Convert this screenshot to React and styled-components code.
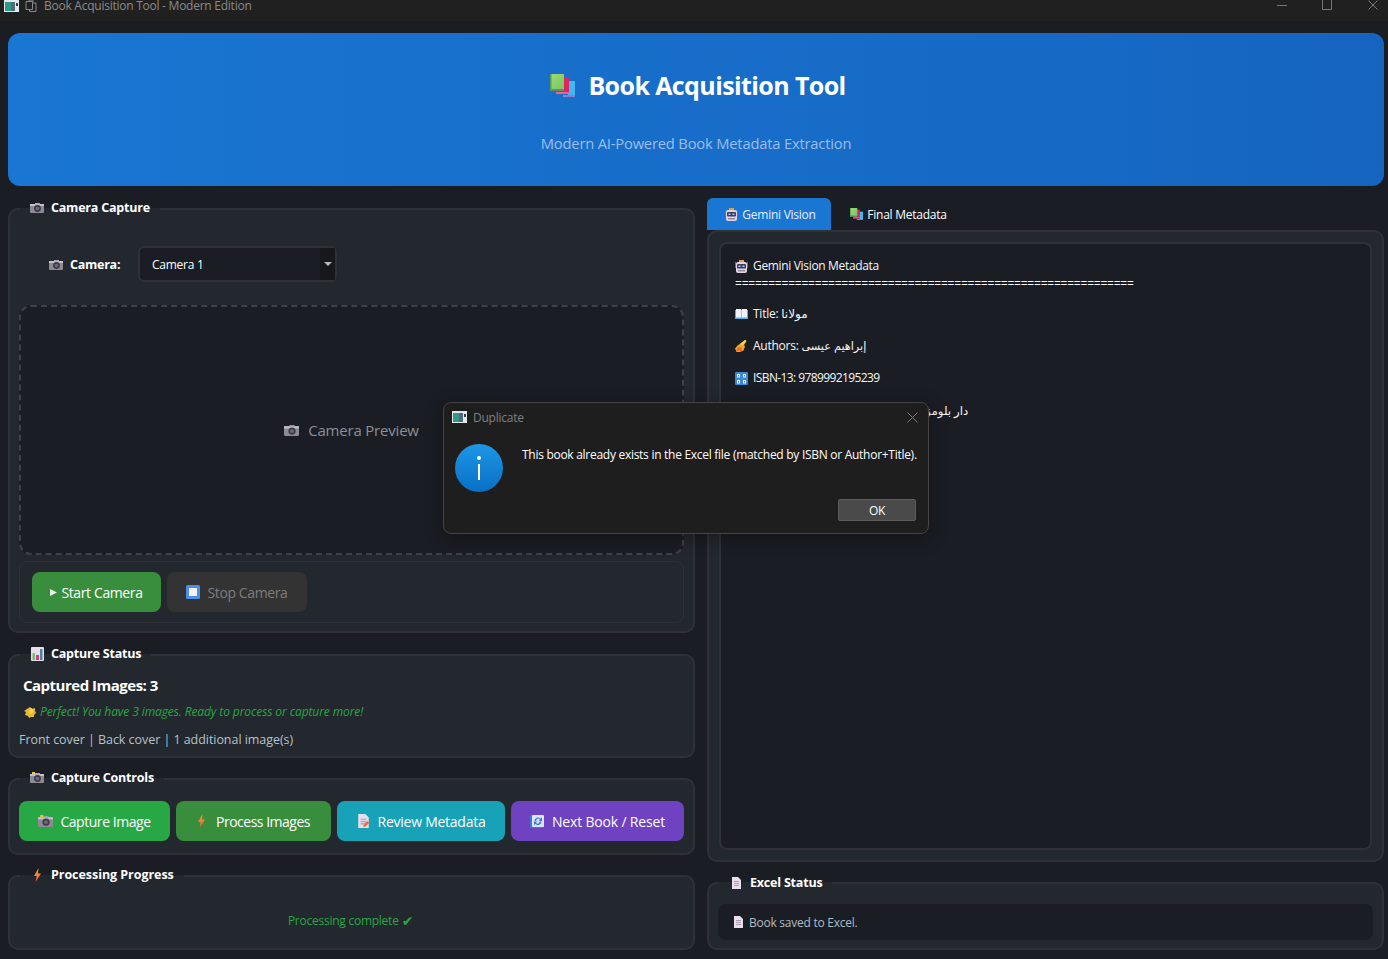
import React from 'react';
import styled, { createGlobalStyle } from 'styled-components';

const Global = createGlobalStyle`
  html, body { margin: 0; padding: 0; background: #1a1d23; }
  body { font-family: "Open Sans", "DejaVu Sans", sans-serif; color: #fff; font-size: 12px; letter-spacing: -0.25px; }
  * { box-sizing: border-box; }
`;

const Page = styled.div`
  position: relative; width: 1388px; height: 959px; overflow: hidden;
  display: flex; flex-direction: column; background: #1a1d23;
`;
const TitleBar = styled.div`
  height: 21px; flex: none; background: #202020; display: flex; align-items: flex-start; overflow: hidden;
`;
const TitleIcons = styled.div`
  display: flex; align-items: center; gap: 6px; margin: 0 0 0 4px; height: 12px; line-height: 12px; color: #8a8a8a; font-size: 12px;
`;
const WindowControls = styled.div`
  margin-left: auto; display: flex; align-items: flex-start; gap: 35px; padding-right: 10px;
  & > svg:last-child { margin-left: 1px; }
`;
const Header = styled.header`
  flex: none; height: 153px; margin: 12px 4px 0 8px; border-radius: 12px;
  background: linear-gradient(90deg, #1976d2, #1565c0);
  display: flex; flex-direction: column; align-items: center; padding-top: 35px;
`;
const HeaderTitle = styled.h1`
  margin: 0 0 0 4px; display: flex; align-items: center; gap: 13px; height: 34px;
  font-size: 25px; font-weight: 700; color: #fff; letter-spacing: -0.6px;
`;
const HeaderSub = styled.div`
  margin-top: 31px; font-size: 14.75px; color: #9dbde8; letter-spacing: -0.2px; line-height: 20px;
`;
const Main = styled.main`
  flex: 1; min-height: 0; display: grid; grid-template-columns: 687px 677px; gap: 12px;
  padding: 12px 4px 9px 8px;
`;
const Column = styled.div`
  display: flex; flex-direction: column; min-height: 0; gap: 12px; padding-top: ${p => p.$top || 0}px;
`;
const Group = styled.fieldset`
  margin: ${p => p.$offset || 0}px 0 0; min-width: 0; background: #23272e; border: 2px solid #2f3135; border-radius: 10px;
  padding: ${p => p.$padding || '0 9px 8px'}; flex: ${p => p.$grow ? 1 : 'none'};
`;
const Legend = styled.legend`
  margin-left: 1px; padding: 0 10px ${p => p.$lift ?? 3}px; height: 18px; line-height: 15px; font-size: 12.5px; font-weight: 700; color: #fff;
  letter-spacing: ${p => p.$track ?? -0.2}px; display: flex; align-items: center; gap: 7px;
`;
const IconSlot = styled.span`
  width: 14px; flex: none; display: flex; align-items: center; justify-content: center;
`;
const CameraRow = styled.div`
  display: flex; align-items: center; height: 36px; margin: 28px 0 23px 30px;
`;
const CameraLabel = styled.div`
  display: flex; align-items: center; gap: 7px; width: 89px; font-size: 12.5px; font-weight: 700;
`;
const Select = styled.div`
  width: 199px; height: 36px; background: #1a1d23; border: 2px solid #2f3135; border-radius: 6px;
  display: flex; align-items: center; padding-left: 12px; font-size: 12px;
`;
const SelectArrow = styled.div`
  margin-left: auto; width: 15px; height: 32px; background: #16181c; display: flex; align-items: center; justify-content: center;
  &::after { content: ""; border: 4px solid transparent; border-top: 4px solid #b8b8b8; border-bottom: 0; }
`;
const Preview = styled.div`
  height: 250px; background: #1a1d23; border: 2px dashed #3f4145; border-radius: 12px;
  display: flex; align-items: center; justify-content: center; gap: 9px;
  font-size: 15px; color: #8b8f96; letter-spacing: -0.2px;
`;
const ButtonPanel = styled.div`
  margin-top: 6px; height: 62px; border: 1px solid #2d3036; border-radius: 8px;
  display: flex; align-items: center; gap: 6px; padding: 0 12px;
`;
const ActionButton = styled.div`
  height: 40px; width: ${p => p.$width}px; border-radius: 8px; background: ${p => p.$bg};
  color: ${p => p.$fg || '#fff'}; font-size: 14px; font-weight: 500;
  display: flex; align-items: center; justify-content: center; gap: ${p => p.$gap ?? 8}px;
  letter-spacing: ${p => p.$track ?? -0.3}px; flex: none;
`;
const StatusCount = styled.div`
  font-size: 15px; font-weight: 700; line-height: 20px; margin: 11px 0 0 4px; letter-spacing: -0.5px;
`;
const StatusHint = styled.div`
  display: flex; align-items: center; gap: 4px; font-style: italic; font-size: 12px; color: #28a745;
  line-height: 16px; margin: 9px 0 0 5px; letter-spacing: -0.1px;
`;
const StatusInfo = styled.div`
  font-size: 12.5px; color: #b3c3cc; line-height: 16px; margin: 12px 0 0 0; letter-spacing: -0.05px;
`;
const ControlRow = styled.div`
  display: flex; gap: 6px; margin-top: 13px; padding-bottom: 4px;
`;
const ProgressText = styled.div`
  margin-top: 28px; color: #28a745; font-size: 12px; line-height: 16px;
  display: flex; justify-content: center; align-items: center; gap: 3px; padding-right: 2px;
`;
const CheckMark = styled.span`
  font-size: 14px; line-height: 16px;
`;
const TabStack = styled.div`
  flex: 1; min-height: 0; display: flex; flex-direction: column;
`;
const Tabs = styled.div`
  display: flex; height: 32px; flex: none;
`;
const Tab = styled.div`
  height: 32px; width: ${p => p.$width}px; background: ${p => p.$active ? '#1976d2' : 'transparent'};
  border-radius: 6px 6px 0 0; display: flex; align-items: center; justify-content: center; gap: 4px; padding-left: 3px;
  font-size: 12px; color: ${p => p.$active ? '#e6f0fb' : '#fff'};
`;
const TabPane = styled.div`
  flex: 1; background: #23272e; border: 2px solid #2f3135; border-radius: 10px; padding: 10px; display: flex;
`;
const MetadataBox = styled.div`
  flex: 1; background: #1a1d23; border: 2px solid #2f3135; border-radius: 8px; padding: 14px;
`;
const MetaLine = styled.div`
  display: flex; align-items: center; gap: 5px; height: 16px; line-height: 16px; font-size: 12px; white-space: pre;
  margin-bottom: ${p => p.$after ?? 16}px; color: #f6f7f9;
`;
const MetaText = styled.span`
  letter-spacing: ${p => p.$track ?? -0.25}px;
`;
const ArabicText = styled.span`
  font-size: ${p => p.$size || 12}px;
`;
const Separator = styled.div`
  height: 16px; line-height: 16px; font-size: 12px; letter-spacing: -0.217px; margin-bottom: 14px; white-space: pre; overflow: hidden; color: #f6f7f9;
`;
const ExcelBar = styled.div`
  height: 36px; margin-top: 12px; margin-bottom: 8px; background: #1a1d23; border-radius: 8px; display: flex; align-items: center; gap: 6px;
  padding-left: 16px; color: #aebcc6; font-size: 12px;
`;
const Dialog = styled.div`
  position: absolute; left: 443px; top: 402px; width: 486px; height: 132px; background: #1e1e1e;
  border: 1px solid #444; border-radius: 8px; box-shadow: 0 4px 18px rgba(0,0,0,.35); display: flex; flex-direction: column;
`;
const DialogTitle = styled.div`
  height: 28px; display: flex; align-items: center; gap: 6px; padding: 0 10px 0 8px; color: #808080; font-size: 12px;
`;
const DialogClose = styled.div`
  margin-left: auto; display: flex;
`;
const DialogBody = styled.div`
  display: flex; gap: 19px; padding: 13px 0 0 11px; height: 68px;
`;
const DialogText = styled.div`
  font-size: 12px; line-height: 16px; color: #fff; padding-top: 3px; white-space: nowrap; letter-spacing: -0.28px;
`;
const DialogFooter = styled.div`
  display: flex; justify-content: flex-end; padding-right: 12px;
`;
const OkButton = styled.div`
  width: 78px; height: 22px; background: #4a4a4a; border: 1px solid #5c5c5c; border-radius: 2px;
  display: flex; align-items: center; justify-content: center; font-size: 12px; color: #fff;
`;

const Svg = ({ w = 16, h = 16, vb, children, style }) => (
  <svg width={w} height={h} viewBox={vb || `0 0 ${w} ${h}`} style={{ flex: 'none', ...style }} aria-hidden="true">{children}</svg>
);

const AppIcon = () => (
  <Svg w={15} h={12} vb="0 0 15 12">
    <rect width="15" height="12" fill="#e4e8ea" />
    <rect x="1" y="2" width="6" height="9" fill="#2f9a87" />
    <rect x="7" y="2" width="4" height="9" fill="#4f6a78" />
    <rect x="12" y="3" width="2" height="3" fill="#2c3e50" />
  </Svg>
);
const OutlineBooks = () => (
  <Svg w={13} h={13}>
    <path d="M1 1.5h6.5v8H1zM4 1.5V0h3.5l1 1.5M7.5 3H11v8.5H4.5v-2" fill="none" stroke="#888" strokeWidth="1" />
  </Svg>
);
const Books = ({ w = 25, h = 23 }) => (
  <Svg w={w} h={h} vb="0 0 25 23">
    <defs><linearGradient id="bookGreen" x1="0" y1="0" x2="1" y2="1"><stop offset="0" stopColor="#9fdc68" /><stop offset="1" stopColor="#76c76a" /></linearGradient></defs>
    <rect x="18" y="7" width="7" height="15" fill="#45b7f0" />
    <rect x="13" y="21" width="12" height="2" fill="#8d7fd0" />
    <rect x="6" y="3" width="13" height="17" fill="#e0245e" />
    <rect x="6" y="18" width="13" height="2" fill="#f06292" />
    <rect x="0" y="0" width="14" height="15" fill="url(#bookGreen)" />
    <rect x="0" y="15" width="14" height="2" fill="#5f8f6a" />
    <rect x="0" y="0" width="1.5" height="17" fill="#5c9a63" />
  </Svg>
);
const Camera = ({ w = 14, h = 11, flash }) => (
  <Svg w={w} h={h} vb="0 0 14 11">
    <rect x="0" y="2" width="14" height="9" rx="1" fill="#8d8a92" />
    <rect x="0" y="2" width="14" height="2" fill="#c4c2c7" />
    <rect x="5" y="1" width="5" height="1.5" fill="#a9a7ad" />
    <circle cx="7.5" cy="6.5" r="3.4" fill="#3e3a48" />
    <circle cx="7.5" cy="6.5" r="1.8" fill="#6d6780" />
    {flash && <path d="M2 0h3v2H2z" fill="#f4c542" />}
  </Svg>
);
const Robot = () => (
  <Svg w={13} h={13}>
    <rect x="1" y="2" width="11" height="11" rx="2" fill="#e2d2e4" />
    <rect x="2" y="4" width="9" height="4.5" rx="1" fill="#3f3c5c" />
    <rect x="3.5" y="5.5" width="2" height="1.5" fill="#9fd3f5" />
    <rect x="7.5" y="5.5" width="2" height="1.5" fill="#9fd3f5" />
    <rect x="4" y="0" width="5" height="2" fill="#d9a441" />
    <rect x="0" y="2" width="1" height="6" fill="#d83a6a" />
    <rect x="12" y="2" width="1" height="6" fill="#d83a6a" />
    <rect x="3" y="10" width="7" height="1.4" fill="#8b84a0" />
  </Svg>
);
const OpenBook = () => (
  <Svg w={13} h={10}>
    <rect y="1" width="13" height="9" fill="#5aa9e6" />
    <path d="M1 0h5.2v8.5H1zM6.8 0H12v8.5H6.8z" fill="#eef3f9" />
  </Svg>
);
const WritingHand = () => (
  <Svg w={13} h={12}>
    <path d="M0 8.5L3 5l3-1 4-4 1.5 1L9 5l1 1.5-1.5 4L5 12H1.5z" fill="#f6a623" />
    <path d="M1 11l2-4 4 .5L6.5 11z" fill="#ee6f2d" />
    <path d="M4 4.5L10 0l1.5 1L8 5z" fill="#fbd34c" />
  </Svg>
);
const NumberKey = () => (
  <Svg w={13} h={13}>
    <rect width="13" height="13" rx="1" fill="#3b88d8" />
    <path d="M2 2h3v3.5H2zM8 2h3v3.5H8zM2 8h3v3.5H2zM8 8h3v3.5H8z" fill="#e4eefa" />
    <path d="M3 3h1v1.5H3zM9 3h1v1.5H9zM3 9h1v1.5H3zM9 9h1v1.5H9z" fill="#3b88d8" />
  </Svg>
);
const Building = () => (
  <Svg w={12} h={13}>
    <rect x="1" width="10" height="13" fill="#b8c0c8" />
  </Svg>
);
const Chart = () => (
  <Svg w={13} h={14}>
    <rect width="13" height="14" rx="1" fill="#e4e0ea" />
    <rect x="1.5" y="6" width="2.5" height="7" fill="#6cc070" />
    <rect x="5" y="8" width="3" height="5" fill="#e0357a" />
    <rect x="9" y="2" width="2.5" height="11" fill="#4d7fa8" />
  </Svg>
);
const Sparkle = () => (
  <Svg w={12} h={11}>
    <path d="M6 0l2 2 3-1 0 3 1 2-2 2 0 2-3 0-2 1-1-2-3-1 1-3-2-1 3-2z" fill="#e8b83a" />
    <path d="M7 1l2 1 0 3-2 2-2-2z" fill="#f7d94c" />
  </Svg>
);
const Bolt = ({ h = 14 }) => (
  <Svg w={9} h={h} vb="0 0 9 14">
    <defs><linearGradient id="bolt" x1="0" y1="0" x2="0" y2="1"><stop offset="0" stopColor="#f7a02c" /><stop offset="1" stopColor="#ef5b3c" /></linearGradient></defs>
    <path d="M5.5 0L1 8h2.7L2.6 14 8 5.6H5z" fill="url(#bolt)" />
  </Svg>
);
const Doc = ({ w = 9, h = 12, pen }) => (
  <Svg w={w} h={h} vb="0 0 9 12">
    <path d="M0 0h6l3 3v9H0z" fill="#e8dfee" />
    <path d="M2 4h5v1H2zM2 6h5v1H2zM2 8h5v1H2z" fill="#a79fb0" />
    {pen && <path d="M4 11l1-2 3-3 1 1v1l-3 3z" fill="#f2683c" />}
  </Svg>
);
const Refresh = () => (
  <Svg w={14} h={13}>
    <rect width="14" height="13" rx="1" fill="#3f76d8" />
    <rect x="2" y="0" width="12" height="12" rx="1" fill="#dbe6fb" />
    <path d="M4.5 6a3.5 3.5 0 0 1 6-2.4L12 2.5V6H8.5L10 4.8A2 2 0 0 0 6.2 6zM11.5 6.5a3.5 3.5 0 0 1-6 2.4L4 10V6.5h3.5L6 7.8a2 2 0 0 0 3.6-1.3z" fill="#3f76d8" />
  </Svg>
);
const StopSquare = () => (
  <Svg w={14} h={14}>
    <rect width="14" height="14" rx="1.5" fill="#4a90ea" />
    <rect x="3" y="3" width="8" height="8" fill="#f3f1fa" />
  </Svg>
);
const Play = () => (
  <Svg w={7} h={7}><path d="M0 0l7 3.5L0 7z" fill="#eef3ee" /></Svg>
);
const CloseX = ({ s = 11, c = '#7a7a7a' }) => (
  <Svg w={s} h={s}><path d={`M.5.5l${s - 1} ${s - 1}M${s - .5} .5l-${s - 1} ${s - 1}`} stroke={c} fill="none" /></Svg>
);
const InfoIcon = () => (
  <Svg w={48} h={48}>
    <defs><linearGradient id="info" x1="0" y1="0" x2="0" y2="1"><stop offset="0" stopColor="#1d97e6" /><stop offset="1" stopColor="#0a6fc4" /></linearGradient></defs>
    <circle cx="24" cy="24" r="24" fill="url(#info)" />
    <circle cx="24" cy="14" r="2" fill="#fff" />
    <rect x="23" y="20" width="2" height="16" fill="#fff" />
  </Svg>
);

export default function App() {
  return (
    <Page>
      <Global />
      <TitleBar>
        <TitleIcons>
          <AppIcon /><OutlineBooks /><span>Book Acquisition Tool - Modern Edition</span>
        </TitleIcons>
        <WindowControls>
          <Svg w={10} h={10}><path d="M0 5.5h10" stroke="#777" /></Svg>
          <Svg w={10} h={10}><path d="M.5-2h9v11.5h-9z" stroke="#777" fill="none" /></Svg>
          <CloseX s={10} />
        </WindowControls>
      </TitleBar>

      <Header>
        <HeaderTitle><Books />Book Acquisition Tool</HeaderTitle>
        <HeaderSub>Modern AI-Powered Book Metadata Extraction</HeaderSub>
      </Header>

      <Main>
        <Column $top={2}>
          <Group>
            <Legend><IconSlot><Camera /></IconSlot>Camera Capture</Legend>
            <CameraRow>
              <CameraLabel><Camera />Camera:</CameraLabel>
              <Select>Camera 1<SelectArrow /></Select>
            </CameraRow>
            <Preview><Camera w={15} h={12} />Camera Preview</Preview>
            <ButtonPanel>
              <ActionButton $bg="#388e3c" $width={129} $gap={4} $track={-0.38}><Play />Start Camera</ActionButton>
              <ActionButton $bg="#333333" $fg="#7d7d7d" $width={140} $gap={7} $track={-0.38}><StopSquare />Stop Camera</ActionButton>
            </ButtonPanel>
          </Group>

          <Group $offset={1}>
            <Legend><IconSlot><Chart /></IconSlot>Capture Status</Legend>
            <StatusCount>Captured Images: 3</StatusCount>
            <StatusHint><Sparkle />Perfect! You have 3 images. Ready to process or capture more!</StatusHint>
            <StatusInfo>Front cover | Back cover | 1 additional image(s)</StatusInfo>
          </Group>

          <Group>
            <Legend><IconSlot><Camera flash /></IconSlot>Capture Controls</Legend>
            <ControlRow>
              <ActionButton $bg="#28a745" $width={151} $gap={7} $track={-0.45}><Camera w={15} h={12} flash />Capture Image</ActionButton>
              <ActionButton $bg="#388e3c" $width={155} $gap={10} $track={-0.5}><Bolt />Process Images</ActionButton>
              <ActionButton $bg="#17a2b8" $width={168} $track={-0.25}><Doc w={13} h={14} pen />Review Metadata</ActionButton>
              <ActionButton $bg="#6f42c1" $width={173} $track={-0.18}><Refresh />Next Book / Reset</ActionButton>
            </ControlRow>
          </Group>

          <Group $grow>
            <Legend $track={-0.05}><IconSlot><Bolt /></IconSlot>Processing Progress</Legend>
            <ProgressText>Processing complete<CheckMark>✔</CheckMark></ProgressText>
          </Group>
        </Column>

        <Column>
          <TabStack>
            <Tabs>
              <Tab $active $width={124}><Robot />Gemini Vision</Tab>
              <Tab $width={132}><Books w={13} h={12} />Final Metadata</Tab>
            </Tabs>
            <TabPane>
              <MetadataBox>
                <MetaLine $after={2}><Robot /><MetaText $track={-0.33}>Gemini Vision Metadata</MetaText></MetaLine>
                <Separator>{'='.repeat(60)}</Separator>
                <MetaLine><OpenBook /><MetaText>Title: مولانا</MetaText></MetaLine>
                <MetaLine><WritingHand /><MetaText>Authors: <ArabicText $size={11.25}>إبراهيم عيسى</ArabicText></MetaText></MetaLine>
                <MetaLine><NumberKey /><MetaText $track={-0.6}>ISBN-13: 9789992195239</MetaText></MetaLine>
                <MetaLine><Building /><MetaText>Publisher: <ArabicText $size={11.75}>دار بلومزبري مؤسسة قطر للنشر</ArabicText></MetaText></MetaLine>
              </MetadataBox>
            </TabPane>
          </TabStack>
          <Group $padding="0 9px 0">
            <Legend $lift={1}><IconSlot><Doc /></IconSlot>Excel Status</Legend>
            <ExcelBar><Doc />Book saved to Excel.</ExcelBar>
          </Group>
        </Column>
      </Main>

      <Dialog>
        <DialogTitle><AppIcon /><span>Duplicate</span><DialogClose><CloseX /></DialogClose></DialogTitle>
        <DialogBody>
          <InfoIcon />
          <DialogText>This book already exists in the Excel file (matched by ISBN or Author+Title).</DialogText>
        </DialogBody>
        <DialogFooter><OkButton>OK</OkButton></DialogFooter>
      </Dialog>
    </Page>
  );
}
